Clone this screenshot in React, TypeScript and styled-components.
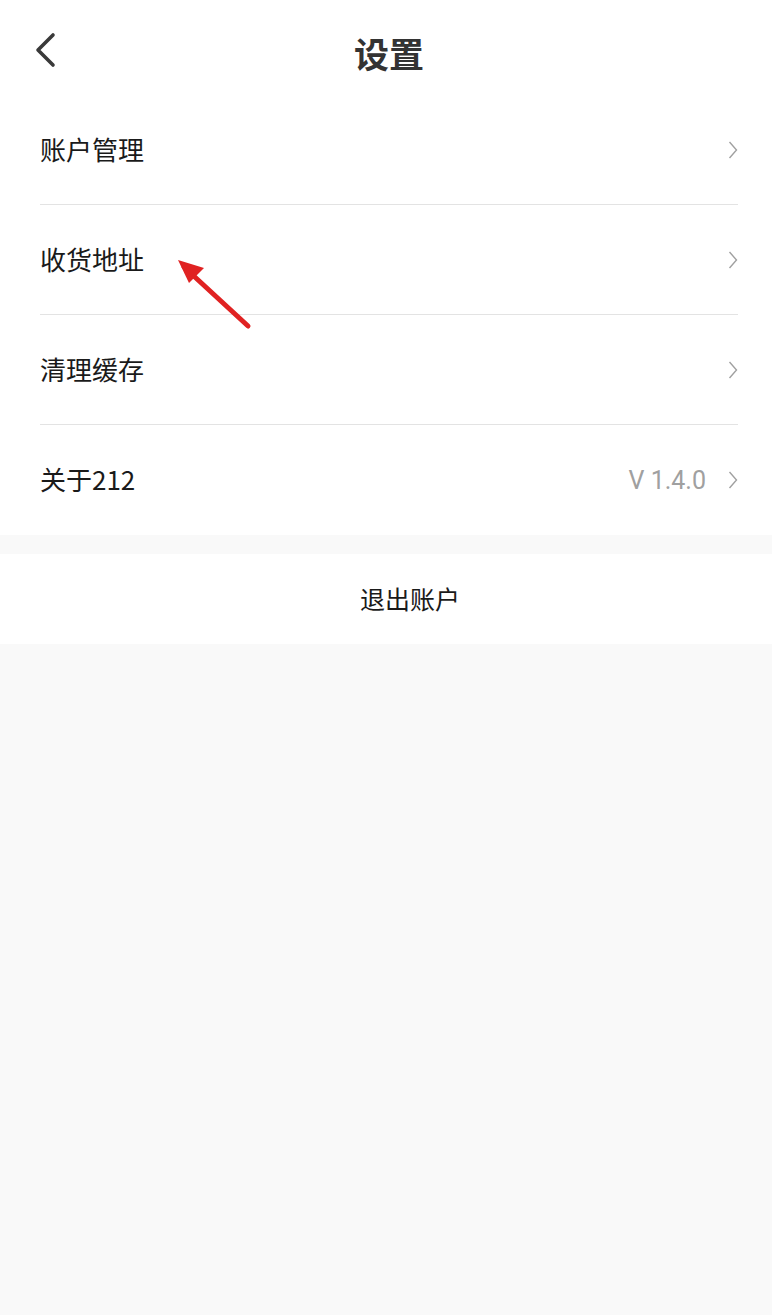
import React from "react";
import styled, { createGlobalStyle } from "styled-components";

const GlobalStyle = createGlobalStyle`
  html, body {
    margin: 0;
    padding: 0;
    background: #f9f9f9;
  }
  body {
    font-family: "Noto Sans CJK SC", "Noto Sans", Roboto, sans-serif;
    color: #1a1a1a;
  }
`;

const items = [
  { label: "账户管理" },
  { label: "收货地址" },
  { label: "清理缓存" },
  { label: "关于212", extra: "V 1.4.0" },
];

const Chevron = () => (
  <svg width="10" height="18" viewBox="0 0 10 18">
    <path d="M1.5 1 L8.5 9 L1.5 17" fill="none" stroke="#a0a0a0" strokeWidth="1.4" />
  </svg>
);

const BackIcon = () => (
  <svg width="24" height="36" viewBox="0 0 24 36">
    <path d="M19 3 L4 18 L19 33" fill="none" stroke="#3a3a3a" strokeWidth="3.6" strokeLinecap="round" strokeLinejoin="round" />
  </svg>
);

const App = () => {
  return (
    <Page>
      <GlobalStyle />
      <Header>
        <BackButton>
          <BackIcon />
        </BackButton>
        <Title>设置</Title>
      </Header>
      <List>
        {items.map((item, i) => (
          <Row key={item.label} last={i === items.length - 1}>
            <RowLabel>{item.label}</RowLabel>
            <RowRight>
              {item.extra && <RowExtra>{item.extra}</RowExtra>}
              <Chevron />
            </RowRight>
          </Row>
        ))}
      </List>
      <Logout>退出账户</Logout>
      <Annotation width="90" height="80" viewBox="0 0 90 80">
        <line x1="22" y1="17" x2="86" y2="76" stroke="#e02222" strokeWidth="5" strokeLinecap="round" />
        <polygon points="16,10 42,18 27,33" fill="#e02222" />
      </Annotation>
    </Page>
  );
};

export default App;

const Page = styled.div`
  position: relative;
  min-height: 1315px;
  background: #f9f9f9;
`;

const Header = styled.div`
  position: relative;
  height: 95px;
  padding-top: 10px;
  display: flex;
  align-items: center;
  justify-content: center;
  background: #fff;
  box-sizing: border-box;
`;

const BackButton = styled.div`
  position: absolute;
  left: 34px;
  top: 32px;
  display: flex;
`;

const Title = styled.h1`
  margin: 0 0 0 6px;
  font-size: 35px;
  font-weight: 700;
  color: #333;
`;

const List = styled.div`
  background: #fff;
  padding: 0 34px 0 40px;
`;

const Row = styled.div<{ last?: boolean }>`
  height: 110px;
  display: flex;
  align-items: center;
  justify-content: space-between;
  border-bottom: ${(p) => (p.last ? "none" : "1px solid #e3e3e3")};
  box-sizing: border-box;
`;

const RowLabel = styled.span`
  font-size: 26px;
  color: #1a1a1a;
  margin-bottom: 3px;
`;

const RowRight = styled.div`
  display: flex;
  align-items: center;
  gap: 20px;
`;

const RowExtra = styled.span`
  font-family: Roboto, "Noto Sans", sans-serif;
  font-size: 25px;
  color: #a0a0a0;
  margin-right: 2px;
`;

const Logout = styled.div`
  margin-top: 19px;
  height: 90px;
  display: flex;
  align-items: center;
  justify-content: center;
  padding-left: 48px;
  padding-bottom: 3px;
  box-sizing: border-box;
  background: #fff;
  font-size: 25px;
  color: #1a1a1a;
`;

const Annotation = styled.svg`
  position: absolute;
  left: 162px;
  top: 250px;
`;
